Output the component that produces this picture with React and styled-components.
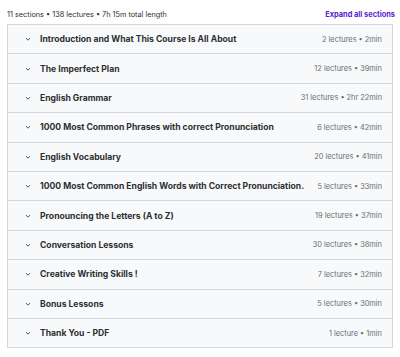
import React from "react";
import styled, { createGlobalStyle } from "styled-components";

const sections = [
  ["Introduction and What This Course Is All About", "2 lectures • 2min"],
  ["The Imperfect Plan", "12 lectures • 39min"],
  ["English Grammar", "31 lectures • 2hr 22min"],
  ["1000 Most Common Phrases with correct Pronunciation", "6 lectures • 42min"],
  ["English Vocabulary", "20 lectures • 41min"],
  ["1000 Most Common English Words with Correct Pronunciation.", "5 lectures • 33min"],
  ["Pronouncing the Letters (A to Z)", "19 lectures • 37min"],
  ["Conversation Lessons", "30 lectures • 38min"],
  ["Creative Writing Skills !", "7 lectures • 32min"],
  ["Bonus Lessons", "5 lectures • 30min"],
  ["Thank You - PDF", "1 lecture • 1min"],
];

const Global = createGlobalStyle`
  body {
    margin: 0;
    background: #fff;
    font-family: Inter, "Noto Sans", sans-serif;
  }
`;

const Wrap = styled.div`
  padding: 7px 7px 0 7px;
`;

const Header = styled.div`
  display: flex;
  justify-content: space-between;
  align-items: center;
  height: 15px;
  margin-bottom: 2px;
  margin-right: -2px;
`;

const Summary = styled.span`
  font-size: 7.3px;
  color: #2d2f31;
`;

const Expand = styled.span`
  font-size: 7.4px;
  font-weight: 700;
  color: #5624d0;
`;

const Panel = styled.div`
  border: 1px solid #d1d7dc;
  border-bottom: none;
`;

const Row = styled.div`
  display: flex;
  align-items: center;
  height: 28.4px;
  padding: 0 10px 0 17px;
  background: #f7f9fa;
  border-bottom: 1px solid #d1d7dc;
`;

const Chevron = styled.svg`
  width: 6px;
  height: 6px;
  margin-right: 9px;
  flex-shrink: 0;
`;

const Title = styled.span`
  flex: 1;
  font-size: 8.6px;
  font-weight: 700;
  color: #2d2f31;
  white-space: nowrap;
`;

const Meta = styled.span`
  font-size: 7.4px;
  color: #6a6f73;
  white-space: nowrap;
`;

export default function App() {
  return (
    <>
      <Global />
      <Wrap>
        <Header>
          <Summary>11 sections • 138 lectures • 7h 15m total length</Summary>
          <Expand>Expand all sections</Expand>
        </Header>
        <Panel>
          {sections.map(([title, meta]) => (
            <Row key={title}>
              <Chevron viewBox="0 0 10 10">
                <path d="M1.5 3.5 L5 7 L8.5 3.5" fill="none" stroke="#2d2f31" strokeWidth="1.4" />
              </Chevron>
              <Title>{title}</Title>
              <Meta>{meta}</Meta>
            </Row>
          ))}
        </Panel>
      </Wrap>
    </>
  );
}
